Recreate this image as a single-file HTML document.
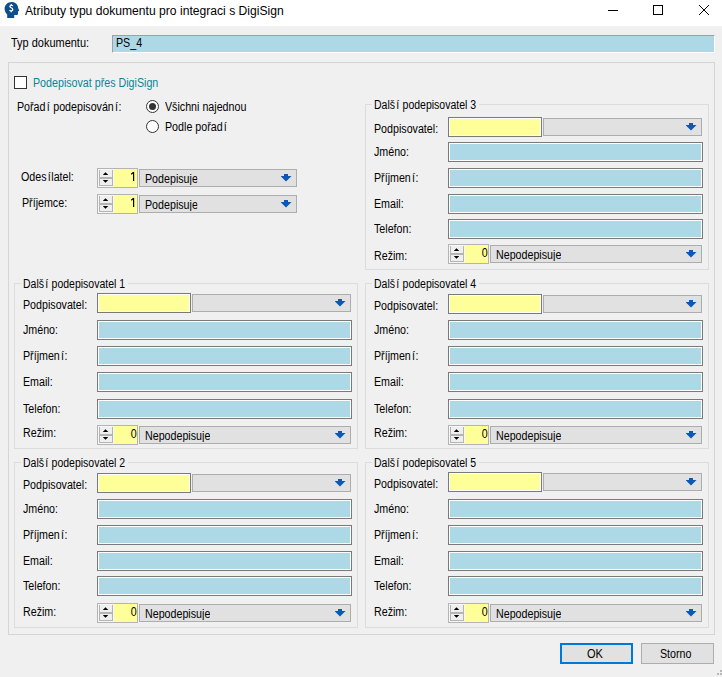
<!DOCTYPE html>
<html><head><meta charset="utf-8"><style>
*{margin:0;padding:0;box-sizing:content-box}
html,body{width:722px;height:677px;overflow:hidden;background:#f0f0f0}
body{position:relative;font-family:"Liberation Sans",sans-serif;font-size:12px;color:#000}
.t{position:absolute;font-size:12px;line-height:12px;white-space:nowrap;transform-origin:0 0}
.tb{position:absolute;border:1px solid #7a7a7a;box-shadow:inset 1px 1px 0 #fff,inset -1px -1px 0 #fff}
.cb{position:absolute;border:1px solid #adadad;background:#e1e1e1}
.arr{position:absolute}
.ii{margin:0 0.6px 0 1.4px}
.grp{position:absolute;border:1px solid #dcdcdc}
.sp{position:absolute;width:39px;height:18px;border:1px solid #b4b4b4;background:#f7f7f7}
.spb{position:absolute;left:1px;top:1px;width:12px;height:15px;border:1px solid #b4b4b4;border-top:none;background:#efefef}
.spm{position:absolute;left:1px;top:8px;width:14px;height:2px;background:#b4b4b4}
.spy{position:absolute;left:16px;top:0;width:23px;height:18px;background:#ffff99}
.spv{position:absolute;right:0px;top:2px;font-size:12px;line-height:12px;transform:scaleX(0.89);transform-origin:100% 0}
.btn{position:absolute;background:#e1e1e1}
</style></head><body>

<div style="position:absolute;left:0;top:0;width:722px;height:26px;background:#fff"></div>
<svg style="position:absolute;left:0;top:0" width="24" height="22"><path d="M7.2 18L7.2 14.5C5.5 13 4.6 11 4.6 8.8C4.6 4.9 7.8 2 11.6 2C15.3 2 18 4.6 18.2 8L19.2 10.8L18 11.4L18 13.4C18 14.3 17.3 15 16.4 15L14.2 15L14.2 18Z" fill="#0d4f8b"/><path d="M12.9 5.9C12.4 5.3 10 5.1 9.9 6.5C9.8 7.9 12.9 7.7 12.8 9.6C12.7 11.1 10.2 11 9.5 10.3M11.3 4V5.3M11.3 10.9V12.2" stroke="#fff" stroke-width="1.3" fill="none"/></svg>
<div class="t" style="left:25px;top:5px;transform:scaleX(1.01);">Atributy typu dokumentu pro integraci s DigiSign</div>
<svg style="position:absolute;left:600px;top:0" width="122" height="26"><path d="M8 10.5H18" stroke="#000" stroke-width="1"/><rect x="53.5" y="5.5" width="9" height="9" fill="none" stroke="#000"/><path d="M99 5L109 15M109 5L99 15" stroke="#000" stroke-width="1"/></svg>
<div class="t" style="left:11px;top:37px;transform:scaleX(0.914);">Typ dokumentu:</div>
<div style="position:absolute;left:112px;top:35px;width:601px;height:16px;background:#add8e6;border-top:1px solid #a0a0a0;border-left:1px solid #a0a0a0;border-bottom:1px solid #fff;border-right:1px solid #fff"></div>
<div class="t" style="left:116px;top:37px;transform:scaleX(0.89);">PS_4</div>
<div style="position:absolute;left:8px;top:62px;width:705px;height:571px;border:1px solid #d5d5d5"></div>
<div style="position:absolute;left:14px;top:76px;width:11px;height:11px;border:1px solid #333;background:#fff"></div>
<div class="t" style="left:33px;top:77px;transform:scaleX(0.89);color:#0a8595">Podepisovat přes DigiSign</div>
<div class="t" style="left:17px;top:101px;transform:scaleX(0.89);">Pořad<span class="ii">í</span> podepisován<span class="ii">í</span>:</div>
<svg style="position:absolute;left:145px;top:99px" width="15" height="36"><circle cx="7.5" cy="7.5" r="6" fill="#fff" stroke="#333" stroke-width="1"/><circle cx="7.5" cy="7.5" r="3.5" fill="#333"/><circle cx="7.5" cy="27.5" r="6" fill="#fff" stroke="#333" stroke-width="1"/></svg>
<div class="t" style="left:165px;top:101px;transform:scaleX(0.89);">Všichni najednou</div>
<div class="t" style="left:165px;top:121px;transform:scaleX(0.89);">Podle pořad<span class="ii">í</span></div>
<div class="t" style="left:21px;top:171px;transform:scaleX(0.89);">Odes<span class="ii">í</span>latel:</div>
<div class="sp" style="left:97px;top:168px"><div class="spb"></div><div class="spm"></div><svg style="position:absolute;left:5px;top:3px" width="7" height="13"><path d="M2.5 0.2L5.3 3H-0.3Z M-0.3 8H5.3L2.5 10.8Z" fill="#000"/></svg><div class="spy"></div><svg style="position:absolute;left:0;top:0" width="40" height="18"><path d="M35.6 3V12M35.6 3.3L33.2 5.2" stroke="#000" stroke-width="1.2" fill="none"/></svg></div>
<div class="cb" style="left:139px;top:169px;width:156px;height:16px"></div>
<svg class="arr" style="left:281px;top:174px" width="11" height="8"><path d="M3 0H7V2H10.5L5 7.5L-0.5 2H3Z" fill="#0a58b8"/></svg>
<div class="t" style="left:145px;top:173px;transform:scaleX(0.89);height:12px;overflow:hidden">Podepisuje</div>
<div class="t" style="left:22px;top:197px;transform:scaleX(0.89);">Příjemce:</div>
<div class="sp" style="left:97px;top:194px"><div class="spb"></div><div class="spm"></div><svg style="position:absolute;left:5px;top:3px" width="7" height="13"><path d="M2.5 0.2L5.3 3H-0.3Z M-0.3 8H5.3L2.5 10.8Z" fill="#000"/></svg><div class="spy"></div><svg style="position:absolute;left:0;top:0" width="40" height="18"><path d="M35.6 3V12M35.6 3.3L33.2 5.2" stroke="#000" stroke-width="1.2" fill="none"/></svg></div>
<div class="cb" style="left:139px;top:195px;width:156px;height:16px"></div>
<svg class="arr" style="left:281px;top:200px" width="11" height="8"><path d="M3 0H7V2H10.5L5 7.5L-0.5 2H3Z" fill="#0a58b8"/></svg>
<div class="t" style="left:145px;top:199px;transform:scaleX(0.89);height:12px;overflow:hidden">Podepisuje</div>
<div class="grp" style="left:14px;top:283px;width:342px;height:164px"></div>
<div style="position:absolute;left:21px;top:277px;width:107px;height:12px;background:#f0f0f0"></div>
<div class="t" style="left:23px;top:278px;transform:scaleX(0.875);">Dalš<span class="ii">í</span> podepisovatel 1</div>
<div class="t" style="left:23px;top:299px;transform:scaleX(0.89);">Podpisovatel:</div>
<div class="tb" style="left:97px;top:293px;width:92px;height:18px;background:#ffff99"></div>
<div class="cb" style="left:192px;top:294px;width:157px;height:16px"></div>
<svg class="arr" style="left:335px;top:299px" width="11" height="8"><path d="M3 0H7V2H10.5L5 7.5L-0.5 2H3Z" fill="#0a58b8"/></svg>
<div class="t" style="left:23px;top:324px;transform:scaleX(0.89);">Jméno:</div>
<div class="tb" style="left:97px;top:320px;width:253px;height:18px;background:#add8e6"></div>
<div class="t" style="left:23px;top:350px;transform:scaleX(0.89);">Příjmen<span class="ii">í</span>:</div>
<div class="tb" style="left:97px;top:346px;width:253px;height:18px;background:#add8e6"></div>
<div class="t" style="left:23px;top:376px;transform:scaleX(0.89);">Email:</div>
<div class="tb" style="left:97px;top:372px;width:253px;height:18px;background:#add8e6"></div>
<div class="t" style="left:23px;top:403px;transform:scaleX(0.89);">Telefon:</div>
<div class="tb" style="left:97px;top:399px;width:253px;height:18px;background:#add8e6"></div>
<div class="t" style="left:23px;top:427px;transform:scaleX(0.89);">Režim:</div>
<div class="sp" style="left:97px;top:425px"><div class="spb"></div><div class="spm"></div><svg style="position:absolute;left:5px;top:3px" width="7" height="13"><path d="M2.5 0.2L5.3 3H-0.3Z M-0.3 8H5.3L2.5 10.8Z" fill="#000"/></svg><div class="spy"></div><div class="spv">0</div></div>
<div class="cb" style="left:139px;top:426px;width:210px;height:16px"></div>
<svg class="arr" style="left:335px;top:431px" width="11" height="8"><path d="M3 0H7V2H10.5L5 7.5L-0.5 2H3Z" fill="#0a58b8"/></svg>
<div class="t" style="left:145px;top:430px;transform:scaleX(0.89);height:12px;overflow:hidden">Nepodepisuje</div>
<div class="grp" style="left:14px;top:462px;width:342px;height:164px"></div>
<div style="position:absolute;left:21px;top:456px;width:107px;height:12px;background:#f0f0f0"></div>
<div class="t" style="left:23px;top:457px;transform:scaleX(0.875);">Dalš<span class="ii">í</span> podepisovatel 2</div>
<div class="t" style="left:23px;top:479px;transform:scaleX(0.89);">Podpisovatel:</div>
<div class="tb" style="left:97px;top:473px;width:92px;height:18px;background:#ffff99"></div>
<div class="cb" style="left:192px;top:474px;width:157px;height:16px"></div>
<svg class="arr" style="left:335px;top:479px" width="11" height="8"><path d="M3 0H7V2H10.5L5 7.5L-0.5 2H3Z" fill="#0a58b8"/></svg>
<div class="t" style="left:23px;top:503px;transform:scaleX(0.89);">Jméno:</div>
<div class="tb" style="left:97px;top:499px;width:253px;height:18px;background:#add8e6"></div>
<div class="t" style="left:23px;top:529px;transform:scaleX(0.89);">Příjmen<span class="ii">í</span>:</div>
<div class="tb" style="left:97px;top:525px;width:253px;height:18px;background:#add8e6"></div>
<div class="t" style="left:23px;top:555px;transform:scaleX(0.89);">Email:</div>
<div class="tb" style="left:97px;top:551px;width:253px;height:18px;background:#add8e6"></div>
<div class="t" style="left:23px;top:580px;transform:scaleX(0.89);">Telefon:</div>
<div class="tb" style="left:97px;top:576px;width:253px;height:18px;background:#add8e6"></div>
<div class="t" style="left:23px;top:606px;transform:scaleX(0.89);">Režim:</div>
<div class="sp" style="left:97px;top:603px"><div class="spb"></div><div class="spm"></div><svg style="position:absolute;left:5px;top:3px" width="7" height="13"><path d="M2.5 0.2L5.3 3H-0.3Z M-0.3 8H5.3L2.5 10.8Z" fill="#000"/></svg><div class="spy"></div><div class="spv">0</div></div>
<div class="cb" style="left:139px;top:604px;width:210px;height:16px"></div>
<svg class="arr" style="left:335px;top:609px" width="11" height="8"><path d="M3 0H7V2H10.5L5 7.5L-0.5 2H3Z" fill="#0a58b8"/></svg>
<div class="t" style="left:145px;top:608px;transform:scaleX(0.89);height:12px;overflow:hidden">Nepodepisuje</div>
<div class="grp" style="left:365px;top:104px;width:342px;height:164px"></div>
<div style="position:absolute;left:372px;top:98px;width:107px;height:12px;background:#f0f0f0"></div>
<div class="t" style="left:374px;top:99px;transform:scaleX(0.875);">Dalš<span class="ii">í</span> podepisovatel 3</div>
<div class="t" style="left:374px;top:123px;transform:scaleX(0.89);">Podpisovatel:</div>
<div class="tb" style="left:448px;top:117px;width:92px;height:18px;background:#ffff99"></div>
<div class="cb" style="left:543px;top:118px;width:157px;height:16px"></div>
<svg class="arr" style="left:686px;top:123px" width="11" height="8"><path d="M3 0H7V2H10.5L5 7.5L-0.5 2H3Z" fill="#0a58b8"/></svg>
<div class="t" style="left:374px;top:146px;transform:scaleX(0.89);">Jméno:</div>
<div class="tb" style="left:448px;top:142px;width:253px;height:18px;background:#add8e6"></div>
<div class="t" style="left:374px;top:172px;transform:scaleX(0.89);">Příjmen<span class="ii">í</span>:</div>
<div class="tb" style="left:448px;top:168px;width:253px;height:18px;background:#add8e6"></div>
<div class="t" style="left:374px;top:198px;transform:scaleX(0.89);">Email:</div>
<div class="tb" style="left:448px;top:194px;width:253px;height:18px;background:#add8e6"></div>
<div class="t" style="left:374px;top:223px;transform:scaleX(0.89);">Telefon:</div>
<div class="tb" style="left:448px;top:219px;width:253px;height:18px;background:#add8e6"></div>
<div class="t" style="left:374px;top:250px;transform:scaleX(0.89);">Režim:</div>
<div class="sp" style="left:448px;top:244px"><div class="spb"></div><div class="spm"></div><svg style="position:absolute;left:5px;top:3px" width="7" height="13"><path d="M2.5 0.2L5.3 3H-0.3Z M-0.3 8H5.3L2.5 10.8Z" fill="#000"/></svg><div class="spy"></div><div class="spv">0</div></div>
<div class="cb" style="left:490px;top:245px;width:210px;height:16px"></div>
<svg class="arr" style="left:686px;top:250px" width="11" height="8"><path d="M3 0H7V2H10.5L5 7.5L-0.5 2H3Z" fill="#0a58b8"/></svg>
<div class="t" style="left:496px;top:249px;transform:scaleX(0.89);height:12px;overflow:hidden">Nepodepisuje</div>
<div class="grp" style="left:365px;top:283px;width:342px;height:164px"></div>
<div style="position:absolute;left:372px;top:277px;width:107px;height:12px;background:#f0f0f0"></div>
<div class="t" style="left:374px;top:278px;transform:scaleX(0.875);">Dalš<span class="ii">í</span> podepisovatel 4</div>
<div class="t" style="left:374px;top:300px;transform:scaleX(0.89);">Podpisovatel:</div>
<div class="tb" style="left:448px;top:294px;width:92px;height:18px;background:#ffff99"></div>
<div class="cb" style="left:543px;top:295px;width:157px;height:16px"></div>
<svg class="arr" style="left:686px;top:300px" width="11" height="8"><path d="M3 0H7V2H10.5L5 7.5L-0.5 2H3Z" fill="#0a58b8"/></svg>
<div class="t" style="left:374px;top:324px;transform:scaleX(0.89);">Jméno:</div>
<div class="tb" style="left:448px;top:320px;width:253px;height:18px;background:#add8e6"></div>
<div class="t" style="left:374px;top:350px;transform:scaleX(0.89);">Příjmen<span class="ii">í</span>:</div>
<div class="tb" style="left:448px;top:346px;width:253px;height:18px;background:#add8e6"></div>
<div class="t" style="left:374px;top:376px;transform:scaleX(0.89);">Email:</div>
<div class="tb" style="left:448px;top:372px;width:253px;height:18px;background:#add8e6"></div>
<div class="t" style="left:374px;top:403px;transform:scaleX(0.89);">Telefon:</div>
<div class="tb" style="left:448px;top:399px;width:253px;height:18px;background:#add8e6"></div>
<div class="t" style="left:374px;top:427px;transform:scaleX(0.89);">Režim:</div>
<div class="sp" style="left:448px;top:425px"><div class="spb"></div><div class="spm"></div><svg style="position:absolute;left:5px;top:3px" width="7" height="13"><path d="M2.5 0.2L5.3 3H-0.3Z M-0.3 8H5.3L2.5 10.8Z" fill="#000"/></svg><div class="spy"></div><div class="spv">0</div></div>
<div class="cb" style="left:490px;top:426px;width:210px;height:16px"></div>
<svg class="arr" style="left:686px;top:431px" width="11" height="8"><path d="M3 0H7V2H10.5L5 7.5L-0.5 2H3Z" fill="#0a58b8"/></svg>
<div class="t" style="left:496px;top:430px;transform:scaleX(0.89);height:12px;overflow:hidden">Nepodepisuje</div>
<div class="grp" style="left:365px;top:462px;width:342px;height:164px"></div>
<div style="position:absolute;left:372px;top:456px;width:107px;height:12px;background:#f0f0f0"></div>
<div class="t" style="left:374px;top:457px;transform:scaleX(0.875);">Dalš<span class="ii">í</span> podepisovatel 5</div>
<div class="t" style="left:374px;top:478px;transform:scaleX(0.89);">Podpisovatel:</div>
<div class="tb" style="left:448px;top:472px;width:92px;height:18px;background:#ffff99"></div>
<div class="cb" style="left:543px;top:473px;width:157px;height:16px"></div>
<svg class="arr" style="left:686px;top:478px" width="11" height="8"><path d="M3 0H7V2H10.5L5 7.5L-0.5 2H3Z" fill="#0a58b8"/></svg>
<div class="t" style="left:374px;top:503px;transform:scaleX(0.89);">Jméno:</div>
<div class="tb" style="left:448px;top:499px;width:253px;height:18px;background:#add8e6"></div>
<div class="t" style="left:374px;top:529px;transform:scaleX(0.89);">Příjmen<span class="ii">í</span>:</div>
<div class="tb" style="left:448px;top:525px;width:253px;height:18px;background:#add8e6"></div>
<div class="t" style="left:374px;top:555px;transform:scaleX(0.89);">Email:</div>
<div class="tb" style="left:448px;top:551px;width:253px;height:18px;background:#add8e6"></div>
<div class="t" style="left:374px;top:580px;transform:scaleX(0.89);">Telefon:</div>
<div class="tb" style="left:448px;top:576px;width:253px;height:18px;background:#add8e6"></div>
<div class="t" style="left:374px;top:606px;transform:scaleX(0.89);">Režim:</div>
<div class="sp" style="left:448px;top:603px"><div class="spb"></div><div class="spm"></div><svg style="position:absolute;left:5px;top:3px" width="7" height="13"><path d="M2.5 0.2L5.3 3H-0.3Z M-0.3 8H5.3L2.5 10.8Z" fill="#000"/></svg><div class="spy"></div><div class="spv">0</div></div>
<div class="cb" style="left:490px;top:604px;width:210px;height:16px"></div>
<svg class="arr" style="left:686px;top:609px" width="11" height="8"><path d="M3 0H7V2H10.5L5 7.5L-0.5 2H3Z" fill="#0a58b8"/></svg>
<div class="t" style="left:496px;top:608px;transform:scaleX(0.89);height:12px;overflow:hidden">Nepodepisuje</div>
<div class="btn" style="left:560px;top:643px;width:69px;height:17px;border:2px solid #0078d7"></div>
<div class="t" style="left:587px;top:648px;transform:scaleX(0.92);">OK</div>
<div class="btn" style="left:641px;top:643px;width:71px;height:19px;border:1px solid #adadad"></div>
<div class="t" style="left:660px;top:648px;transform:scaleX(0.89);">Storno</div>
<div style="position:absolute;left:720px;top:670px;width:2px;height:2px;background:#b8b8b8"></div>
<div style="position:absolute;left:717px;top:673px;width:2px;height:2px;background:#b8b8b8"></div>
<div style="position:absolute;left:720px;top:673px;width:2px;height:2px;background:#b8b8b8"></div>
</body></html>
